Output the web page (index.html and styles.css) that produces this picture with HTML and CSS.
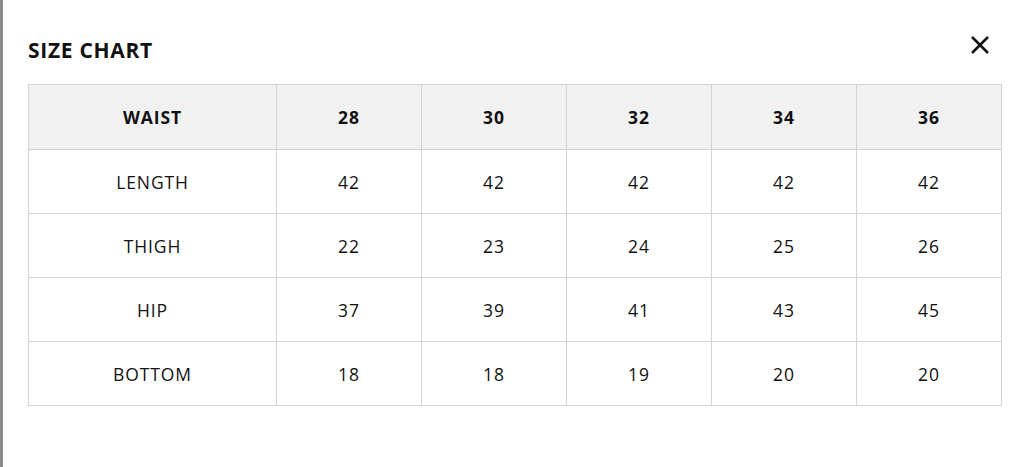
FILE: index.html
```html
<!DOCTYPE html>
<html>
<head>
<meta charset="utf-8">
<link rel="stylesheet" href="styles.css">
</head>
<body>
<div class="modal">
  <div class="modal-head">
    <h2 class="title">SIZE CHART</h2>
    <button class="close" aria-label="Close">
      <svg width="20" height="20" viewBox="0 0 20 20"><path d="M2 2 L18 18 M18 2 L2 18" stroke="#111" stroke-width="2.6" fill="none"/></svg>
    </button>
  </div>
  <table class="chart">
    <thead>
      <tr><th>WAIST</th><th>28</th><th>30</th><th>32</th><th>34</th><th>36</th></tr>
    </thead>
    <tbody>
      <tr><td>LENGTH</td><td>42</td><td>42</td><td>42</td><td>42</td><td>42</td></tr>
      <tr><td>THIGH</td><td>22</td><td>23</td><td>24</td><td>25</td><td>26</td></tr>
      <tr><td>HIP</td><td>37</td><td>39</td><td>41</td><td>43</td><td>45</td></tr>
      <tr><td>BOTTOM</td><td>18</td><td>18</td><td>19</td><td>20</td><td>20</td></tr>
    </tbody>
  </table>
</div>
</body>
</html>
```
FILE: styles.css
```css
html, body {
  margin: 0;
  padding: 0;
  background: #fff;
  height: 100%;
}
body {
  font-family: "Open Sans", "Liberation Sans", sans-serif;
  color: #111;
}
.modal {
  box-sizing: border-box;
  height: 100%;
  border-left: 3px solid #8a8a8a;
  padding: 34px 22px 0 25px;
}
.modal-head {
  display: flex;
  justify-content: space-between;
  align-items: flex-start;
  height: 32px;
  margin-bottom: 18px;
}
.title {
  margin: 0;
  font-size: 21px;
  font-weight: 700;
  letter-spacing: 0.7px;
  line-height: 32px;
}
.close {
  border: 0;
  background: none;
  padding: 0;
  margin: 1px 12px 0 0;
  width: 20px;
  height: 20px;
  display: flex;
}
.chart {
  width: 974px;
  border-collapse: collapse;
  table-layout: fixed;
}
.chart th, .chart td {
  border: 1px solid #d3d3d3;
  text-align: center;
  font-size: 17.5px;
  letter-spacing: 0.9px;
  height: 63px;
  padding: 0;
}
.chart th:first-child, .chart td:first-child {
  width: 247px;
}
.chart th {
  background: #f1f1f1;
  font-weight: 700;
  height: 64px;
}
.chart td {
  font-weight: 400;
}
```
